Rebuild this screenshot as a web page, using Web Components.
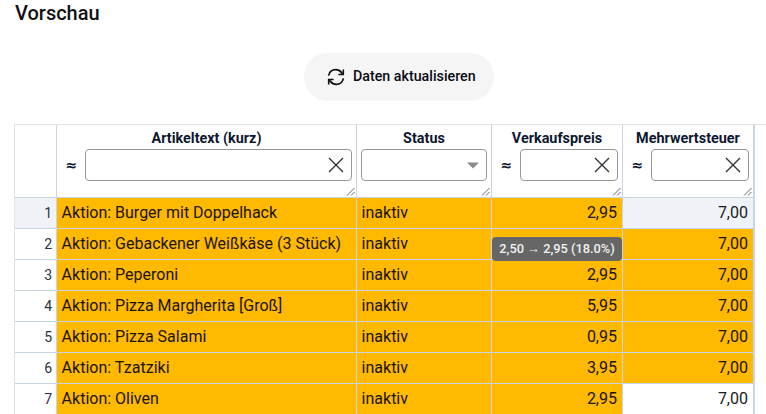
<!DOCTYPE html>
<html lang="de"><head><meta charset="utf-8"><title>Vorschau</title>
<style>html,body{margin:0;padding:0;background:#fff;height:414px;overflow:hidden;font-family:Roboto,sans-serif;}</style>
</head><body>
<preview-page></preview-page>
<script>
class RefreshButton extends HTMLElement{constructor(){super();this.attachShadow({mode:'open'}).innerHTML=`<style>
:host{display:inline-flex;align-items:center;gap:7px;height:48px;width:190px;box-sizing:border-box;padding-left:22px;border-radius:24px;background:#f5f5f5;color:#0a0a14;font:500 14.25px/20px Roboto,sans-serif}
svg{width:20px;height:20px;display:block;flex:none}
span{padding-bottom:2px}
</style><svg viewBox="0 0 20 20" fill="none" stroke="#111" stroke-width="1.7"><path d="M2.6 8.6C3.3 5.1 6.2 2.7 9.8 2.7c2.4 0 4.3 1 5.8 2.9l1.6 1.7"/><path d="M17.3 2.6v4.9h-4.9" stroke-width="1.6"/><path d="M17.4 11.4c-.7 3.5-3.6 5.9-7.2 5.9-2.4 0-4.3-1-5.8-2.9l-1.6-1.7"/><path d="M2.7 17.4v-4.9h4.9" stroke-width="1.6"/></svg><span><slot></slot></span>`}}
customElements.define('refresh-button',RefreshButton);

const grip=`<svg class="grip" width="9" height="9" viewBox="0 0 9 9" stroke="#666" stroke-width="1" fill="none"><path d="M1 8.5 8.5 1M5 8.5 8.5 5"/></svg>`;
class FilterCell extends HTMLElement{constructor(){super();this.attachShadow({mode:'open'})}
connectedCallback(){const sel=this.hasAttribute('select');this.shadowRoot.innerHTML=`<style>
:host{display:block;position:relative;box-sizing:border-box;height:72px;background:#fff;font-family:Roboto,sans-serif}
.t{font:700 14.4px/20px Roboto,sans-serif;color:#0d1730;text-align:center;padding-top:4px;height:24px;box-sizing:border-box}
.r{display:flex;align-items:center;height:32px;padding:0 4px;box-sizing:border-box}
.a{flex:none;width:24px;padding-left:4.5px;box-sizing:border-box;font:700 14px/20px "DejaVu Sans",sans-serif;color:#0d1730}
.i{flex:1;height:32px;box-sizing:border-box;border:1px solid #999;border-radius:4px;background:#fff;display:flex;align-items:center;justify-content:flex-end;padding-right:7px}
.s{padding-right:6px}
.grip{position:absolute;right:1px;bottom:1px}
</style><div class="t"><slot></slot></div><div class="r">${sel?'':'<span class="a">≈</span>'}<div class="i ${sel?'s':''}">${sel?
`<svg width="14" height="7" viewBox="0 0 14 7"><path d="M1 .5h12L7 6.5z" fill="#8a8a8a"/></svg>`:
`<svg width="16" height="16" viewBox="0 0 16 16" stroke="#333" stroke-width="1.4" fill="none"><path d="M1 1l14 14M15 1 1 15"/></svg>`}</div></div>${grip}`}}
customElements.define('filter-cell',FilterCell);

class GridCell extends HTMLElement{constructor(){super();this.attachShadow({mode:'open'}).innerHTML=`<style>
:host{display:flex;align-items:center;box-sizing:border-box;height:30px;padding:0 5px 0 4.6px;font:400 16px/20px Roboto,sans-serif;color:#1a1a1a;background:#fff;white-space:nowrap;overflow:visible}
:host([hi]){background:#ffb900;color:#1a1300}
:host([num]){justify-content:flex-end}
:host([idx]){justify-content:flex-end;font-size:14px;color:#2b3340;padding-right:4px}
:host([sel]){background:#eff3f8}
</style><slot></slot>`}}
customElements.define('grid-cell',GridCell);

class ChangeTip extends HTMLElement{constructor(){super();this.attachShadow({mode:'open'}).innerHTML=`<style>
:host{position:absolute;left:0;right:0;top:8px;height:24px;background:#666;border-radius:4px;color:#f2f2f2;font:500 12.8px/24px Roboto,sans-serif;text-align:center;white-space:nowrap;z-index:2}
</style><slot></slot>`}}
customElements.define('change-tip',ChangeTip);

class DataGrid extends HTMLElement{constructor(){super();this.attachShadow({mode:'open'}).innerHTML=`<style>
:host{display:block;margin-left:14px;position:relative}
.g{display:grid;grid-template-columns:41px 299px 134px 130px 130px;gap:1px;background:#c9d4e4;width:739px;padding:1px 1px 0 1px;box-sizing:content-box;border-top:0}
.top{position:absolute;left:0;top:0;width:752px;height:1px;background:#dfe3e8;z-index:1}
.lft{position:absolute;left:0;top:0;bottom:0;width:1px;background:#dfe3e8;z-index:1}
.hd{height:72px;background:#fff}
.wrap{position:relative}
</style><div class="top"></div><div class="lft"></div><div class="g" id="g"><div class="hd"></div>
<filter-cell>Artikeltext (kurz)</filter-cell><filter-cell select>Status</filter-cell><filter-cell>Verkaufspreis</filter-cell><filter-cell>Mehrwertsteuer</filter-cell></div>`;
const rows=[["Aktion: Burger mit Doppelhack","2,95",0],["Aktion: Gebackener Weißkäse (3 Stück)","",1],["Aktion: Peperoni","2,95",1],["Aktion: Pizza Margherita [Groß]","5,95",1],["Aktion: Pizza Salami","0,95",1],["Aktion: Tzatziki","3,95",1],["Aktion: Oliven","2,95",0]];
const g=this.shadowRoot.getElementById('g');let h='';
rows.forEach((r,i)=>{const s=i==0?' sel':'';
h+=`<grid-cell idx${s}>${i+1}</grid-cell><grid-cell hi>${r[0]}</grid-cell><grid-cell hi>inaktiv</grid-cell><div class="wrap"><grid-cell hi num>${r[1]}</grid-cell>${r[1]?'':'<change-tip>2,50 <span style="font-family:\'Liberation Sans\',sans-serif">→</span> 2,95 (18.0%)</change-tip>'}</div><grid-cell num ${r[2]?'hi':''}${s}>7,00</grid-cell>`});
g.insertAdjacentHTML('beforeend',h);}}
customElements.define('data-grid',DataGrid);

class PreviewPage extends HTMLElement{constructor(){super();this.attachShadow({mode:'open'}).innerHTML=`<style>
:host{display:block;height:414px;overflow:hidden}
h2{margin:0;padding:1px 0 0 15px;font:500 20px/24px Roboto,sans-serif;color:#111;height:26px;box-sizing:border-box}
.b{display:flex;justify-content:center;padding:27px 0 23px 32px}
</style><h2>Vorschau</h2><div class="b"><refresh-button>Daten aktualisieren</refresh-button></div><data-grid></data-grid>`}}
customElements.define('preview-page',PreviewPage);
</script></body></html>
